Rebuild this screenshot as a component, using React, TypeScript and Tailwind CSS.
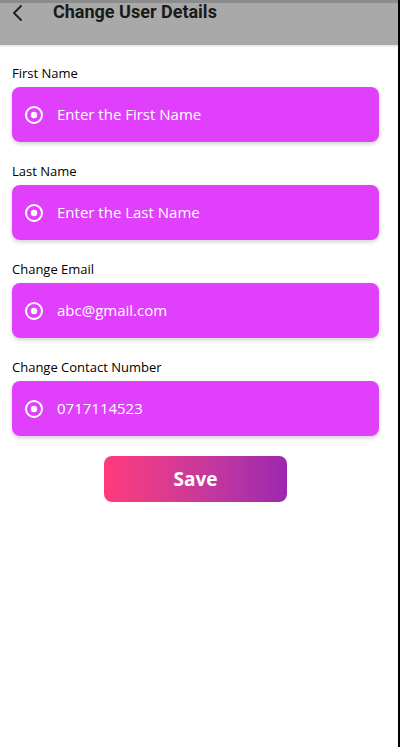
import React from "react";

const fields = [
  { label: "First Name", value: "Enter the First Name" },
  { label: "Last Name", value: "Enter the Last Name" },
  { label: "Change Email", value: "abc@gmail.com" },
  { label: "Change Contact Number", value: "0717114523" },
];

const RadioIcon = () => (
  <svg width="20" height="20" viewBox="0 0 20 20" fill="none">
    <circle cx="10" cy="10" r="8" stroke="white" strokeWidth="2" />
    <circle cx="10" cy="10" r="3.2" fill="white" />
  </svg>
);

export default function App() {
  return (
    <div className="relative h-[747px] w-[400px] overflow-hidden border-r-2 border-black bg-white font-['Open_Sans',sans-serif]">
      {/* Header */}
      <div className="flex h-[45px] items-start border-t-[3px] border-[#8c8c8c] bg-[#a9a9a9] shadow-[0_1px_2px_rgba(0,0,0,0.15)]">
        <div className="flex h-[20px] items-center pl-[11px]">
          <svg width="14" height="18" viewBox="0 0 14 18" fill="none">
            <path d="M10 2 L3 9 L10 16" stroke="#222" strokeWidth="2" strokeLinecap="round" strokeLinejoin="round" />
          </svg>
        </div>
        <h1 className="ml-[28px] -mt-[3px] font-['Roboto',sans-serif] text-[18px] font-bold leading-[24px] text-[#1a1a1a]">
          Change User Details
        </h1>
      </div>

      {/* Form */}
      <div className="flex flex-col px-3">
        {fields.map((f, i) => (
          <div key={f.label} className={`flex flex-col ${i === 0 ? "mt-[19px]" : "mt-[20px]"}`}>
            <label className="text-[13px] leading-[18px] text-black">{f.label}</label>
            <div className="mt-[5px] flex h-[55px] w-[367px] items-center rounded-[8px] bg-[#e040fb] pl-[12px] shadow-[0_2px_4px_rgba(0,0,0,0.18)]">
              <RadioIcon />
              <span className="ml-[13px] text-[15px] text-white">{f.value}</span>
            </div>
          </div>
        ))}
        <div className="mt-[20px] flex w-[367px] justify-center">
          <button className="h-[46px] w-[183px] rounded-[8px] bg-gradient-to-r from-[#ff3a7a] to-[#9c27b0] text-[19px] font-bold text-white">
            Save
          </button>
        </div>
      </div>
    </div>
  );
}
